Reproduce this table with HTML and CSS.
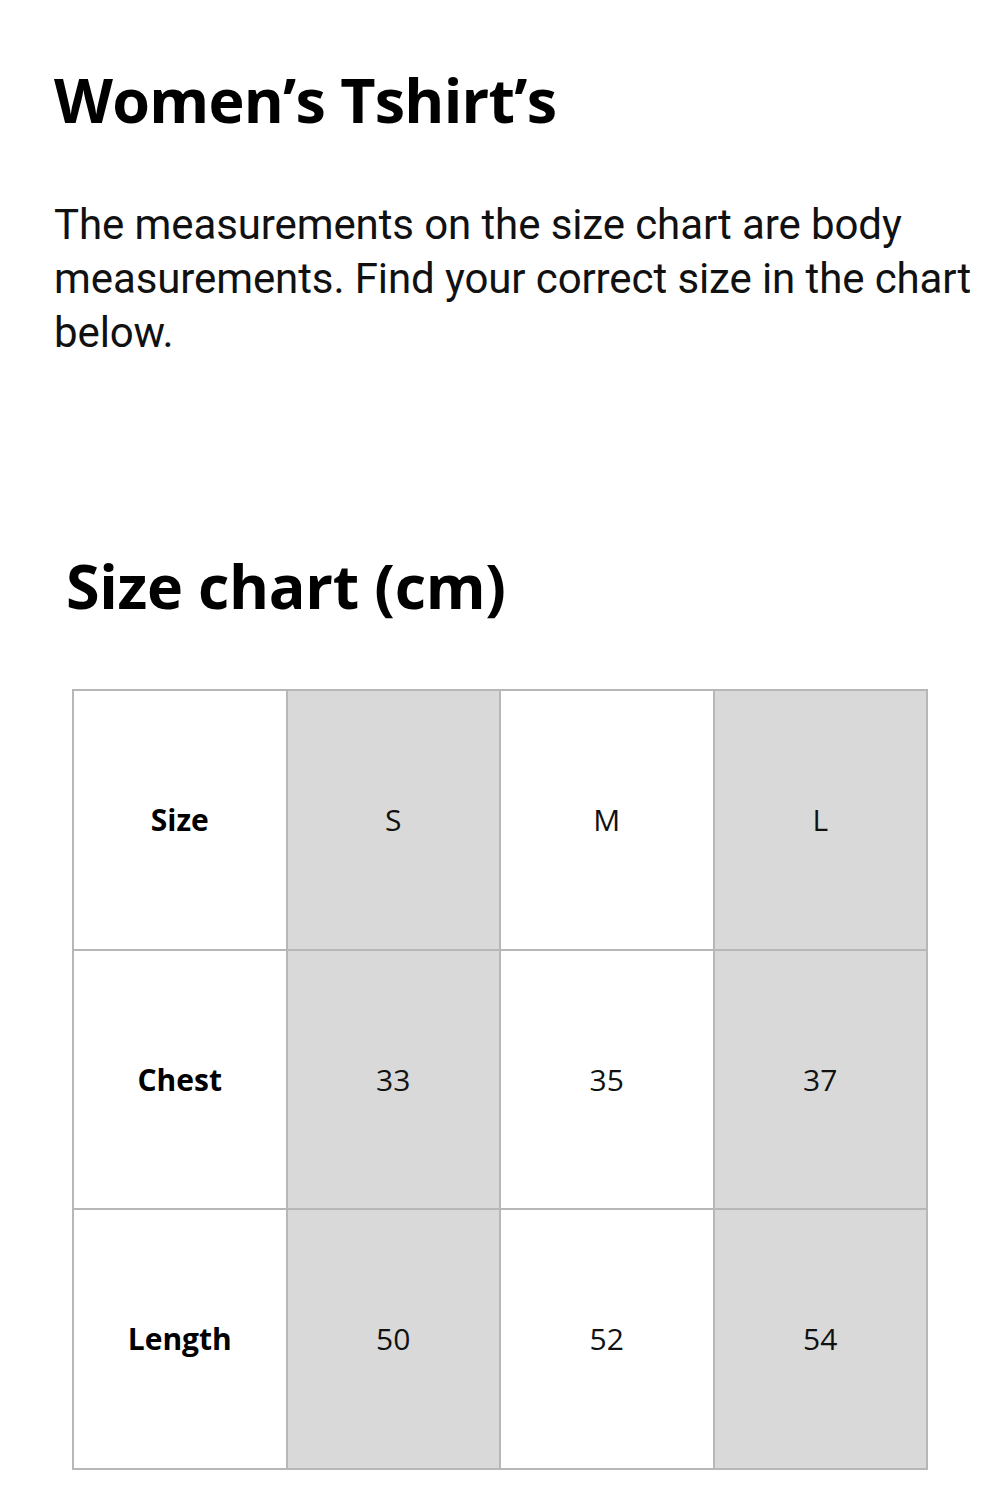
FILE: index.html
```html
<!DOCTYPE html>
<html>
<head>
<meta charset="utf-8">
<link rel="stylesheet" href="styles.css">
</head>
<body>
<main class="page">
  <h1 class="title">Women’s Tshirt’s</h1>
  <p class="intro">The measurements on the size chart are body measurements. Find your correct size in the chart below.</p>
  <h2 class="chart-title">Size chart (cm)</h2>
  <div class="chart">
    <div class="cell label">Size</div>
    <div class="cell shade">S</div>
    <div class="cell">M</div>
    <div class="cell shade">L</div>
    <div class="cell label">Chest</div>
    <div class="cell shade">33</div>
    <div class="cell">35</div>
    <div class="cell shade">37</div>
    <div class="cell label">Length</div>
    <div class="cell shade">50</div>
    <div class="cell">52</div>
    <div class="cell shade">54</div>
  </div>
</main>
</body>
</html>
```
FILE: styles.css
```css
html, body {
  margin: 0;
  padding: 0;
  background: #ffffff;
}
.page {
  padding: 60px 0 0 54px;
  color: #000;
  font-family: "Open Sans", sans-serif;
}
.title {
  margin: 0;
  font-family: "Open Sans", sans-serif;
  font-weight: 700;
  font-size: 61px;
  line-height: 80px;
  letter-spacing: -0.75px;
}
.intro {
  margin: 58px 0 0 0;
  width: 946px;
  font-family: "Roboto", sans-serif;
  font-weight: 400;
  font-size: 42px;
  line-height: 54px;
  letter-spacing: -0.1px;
  color: #111;
}
.chart-title {
  margin: 186px 0 0 12px;
  font-family: "Open Sans", sans-serif;
  font-weight: 700;
  font-size: 61px;
  line-height: 80px;
  letter-spacing: -0.35px;
}
.chart {
  margin: 63px 0 0 18px;
  width: 856px;
  display: grid;
  grid-template-columns: repeat(4, 1fr);
  grid-auto-rows: 259.6px;
  border-top: 2px solid #b7b7b7;
  border-left: 2px solid #b7b7b7;
  box-sizing: border-box;
}
.cell {
  display: flex;
  align-items: center;
  justify-content: center;
  border-right: 2px solid #b7b7b7;
  border-bottom: 2px solid #b7b7b7;
  font-family: "Open Sans", sans-serif;
  font-size: 30px;
  font-weight: 400;
  color: #111;
}
.cell.label {
  font-weight: 700;
  color: #000;
}
.cell.shade {
  background: #d9d9d9;
}
```
